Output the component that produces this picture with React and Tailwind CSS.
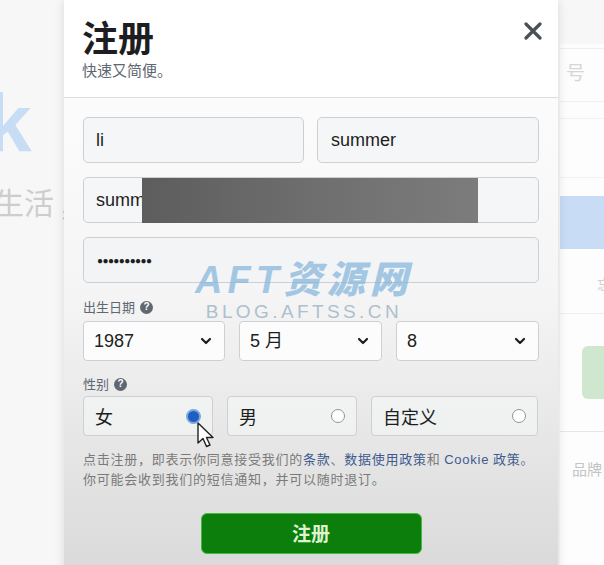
import { ChevronDown } from 'lucide-react';

const cjk = { fontFamily: '"Noto Sans CJK SC", "Noto Sans", sans-serif' };
const latin = { fontFamily: '"Liberation Sans", "Noto Sans CJK SC", sans-serif' };

function HelpDot() {
    return (
        <span className="ml-[5px] inline-flex h-[13px] w-[13px] items-center justify-center rounded-full bg-[#606770] text-[10px] font-bold leading-none text-white" style={latin}>
            ?
        </span>
    );
}

function Select({ value, width }) {
    return (
        <div className={`flex h-[40px] ${width} items-center justify-between rounded-[4px] border border-[#ccd0d5] bg-white/80 pl-[10px] pr-[10px]`}>
            <span className="text-[18px] text-[#1c1e21]" style={latin}>{value}</span>
            <ChevronDown size={16} strokeWidth={3.2} className="text-[#1c1e21]" />
        </div>
    );
}

function Radio({ label, checked, width }) {
    return (
        <div className={`flex h-[40px] ${width} items-center justify-between rounded-[4px] border border-[#ccd0d5] bg-[#f5f6f7]/60 pl-[11px] pr-[11px]`}>
            <span className="text-[18px] text-[#1c1e21]" style={cjk}>{label}</span>
            {checked ? (
                <span className="flex h-[15px] w-[15px] items-center justify-center rounded-full border-2 border-[#79a7e0] bg-[#1f5fbf]" />
            ) : (
                <span className="h-[14px] w-[14px] rounded-full border border-[#8d949e] bg-white" />
            )}
        </div>
    );
}

export default function App() {
    return (
        <div className="relative h-[565px] w-[604px] overflow-hidden bg-[#f7f7f7]">

            {/* faded page behind */}
            <div className="absolute left-[-14px] top-[82px] text-[82px] font-bold leading-none text-[#c7ddf5]" style={latin}>k</div>
            <div className="absolute left-[-6px] top-[186px] text-[30px] leading-none text-[#cdcdcd]" style={cjk}>生活 ,</div>

            <div className="absolute left-[560px] top-[44px] h-[540px] w-[60px] bg-white/70">
                <div className="mt-[4px] h-[54px] border-y border-[#f0f0f0] pl-[6px] pt-[13px] text-[19px] leading-none text-[#d6d6d6]" style={cjk}>号</div>
                <div className="mt-[16px] h-[60px] border-y border-[#f2f2f2]" />
                <div className="mt-[18px] h-[53px] bg-[#c8dcf5]" />
                <div className="mt-[28px] pl-[37px] text-[14px] leading-none text-[#d0d0d0]" style={cjk}>忘</div>
                <div className="mt-[22px] border-t border-[#efefef]" />
                <div className="ml-[22px] mt-[32px] h-[53px] rounded-l-[6px] bg-[#cfe7cf]" />
                <div className="mt-[32px] border-t border-[#e6e6e6]" />
                <div className="mt-[29px] pl-[12px] text-[15px] leading-none text-[#c4c4c4]" style={cjk}>品牌</div>
            </div>

            {/* modal */}
            <div className="absolute left-[64px] top-0 h-[580px] w-[494px] bg-gradient-to-b from-white via-[#f5f5f5] to-[#d9d9d9] shadow-[0_0_10px_rgba(0,0,0,0.12)]" style={cjk}>
                <div className="relative h-[98px] border-b border-[#dadde1] bg-white px-[18px] pt-[17px]">
                    <h1 className="text-[36px] font-bold leading-[38px] text-[#1c1e21]">注册</h1>
                    <p className="mt-[5px] text-[15px] leading-[20px] text-[#606770]">快速又简便。</p>
                    <svg className="absolute right-[16px] top-[22px]" width="18" height="18" viewBox="0 0 18 18">
                        <path d="M2 2 L16 16 M16 2 L2 16" stroke="#4b4f56" strokeWidth="3.2" strokeLinecap="round" />
                    </svg>
                </div>

                <div className="flex flex-col px-[19px] pt-[19px]">
                    <div className="flex gap-[13px]">
                        <div className="flex h-[46px] w-[221px] items-center rounded-[5px] border border-[#ccd0d5] bg-[#f5f6f7] px-[12px] text-[18px] text-[#1c1e21]" style={latin}>li</div>
                        <div className="flex h-[46px] w-[222px] items-center rounded-[5px] border border-[#ccd0d5] bg-[#f5f6f7] px-[13px] text-[18px] text-[#1c1e21]" style={latin}>summer</div>
                    </div>
                    <div className="relative mt-[14px] flex h-[46px] items-center rounded-[5px] border border-[#ccd0d5] bg-[#f5f6f7] px-[12px] text-[18px] text-[#1c1e21]" style={latin}>
                        summ
                        <div className="absolute left-[58px] top-0 h-[45px] w-[336px] bg-gradient-to-r from-[#5d5d5d] via-[#6e6e6e] to-[#7c7c7c]" />
                    </div>
                    <div className="mt-[14px] flex h-[46px] items-center rounded-[5px] border border-[#ccd0d5] bg-[#f3f4f5] px-[13px] text-[10px] tracking-[-0.6px] text-[#1c1e21]" style={latin}>
                        ●●●●●●●●●●
                    </div>

                    <div className="mt-[14px] flex items-center text-[13px] leading-[20px] text-[#606770]">
                        出生日期<HelpDot />
                    </div>
                    <div className="mt-[4px] flex gap-[14px]">
                        <Select value="1987" width="w-[142px]" />
                        <Select value="5 月" width="w-[143px]" />
                        <Select value="8" width="w-[143px]" />
                    </div>

                    <div className="mt-[13px] flex items-center text-[13px] leading-[20px] text-[#606770]">
                        性别<HelpDot />
                    </div>
                    <div className="mt-[2px] flex gap-[14px]">
                        <Radio label="女" checked width="w-[130px]" />
                        <Radio label="男" width="w-[130px]" />
                        <Radio label="自定义" width="w-[167px]" />
                    </div>

                    <p className="mt-[13px] text-[13px] leading-[19px] tracking-[0.75px] text-[#7a7a7a]">
                        点击注册，即表示你同意接受我们的<span className="text-[#3d5a8f]">条款</span>、<span className="text-[#3d5a8f]">数据使用政策</span>和 <span className="text-[#3d5a8f]" style={latin}>Cookie</span> <span className="text-[#3d5a8f]">政策</span>。
                        <br />
                        你可能会收到我们的短信通知，并可以随时退订。
                    </p>

                    <div className="mt-[25px] flex justify-center">
                        <button className="h-[41px] w-[221px] rounded-[6px] border border-[#45b845] bg-[#0b7e0b] text-[19px] font-bold text-[#dff2d2]">
                            注册
                        </button>
                    </div>
                </div>

                {/* watermark */}
                <div className="pointer-events-none absolute left-[131px] top-[258px] flex flex-col items-center">
                    <div className="text-[38px] font-black italic leading-[44px] tracking-[5px] text-[#7fb3dc]/70" style={latin}>AFT资源网</div>
                    <div className="-mt-[1px] text-[19px] leading-[22px] tracking-[3.4px] text-[#9ab1c4]/80" style={latin}>BLOG.AFTSS.CN</div>
                </div>

                {/* cursor */}
                <svg className="absolute left-[132px] top-[422px]" width="20" height="28" viewBox="0 0 20 28">
                    <path d="M2 1 L2 21 L7 16.5 L10.5 24.5 L14 23 L10.5 15.5 L17 15.5 Z" fill="white" stroke="#222" strokeWidth="1.4" strokeLinejoin="round" />
                </svg>
            </div>
        </div>
    );
}
